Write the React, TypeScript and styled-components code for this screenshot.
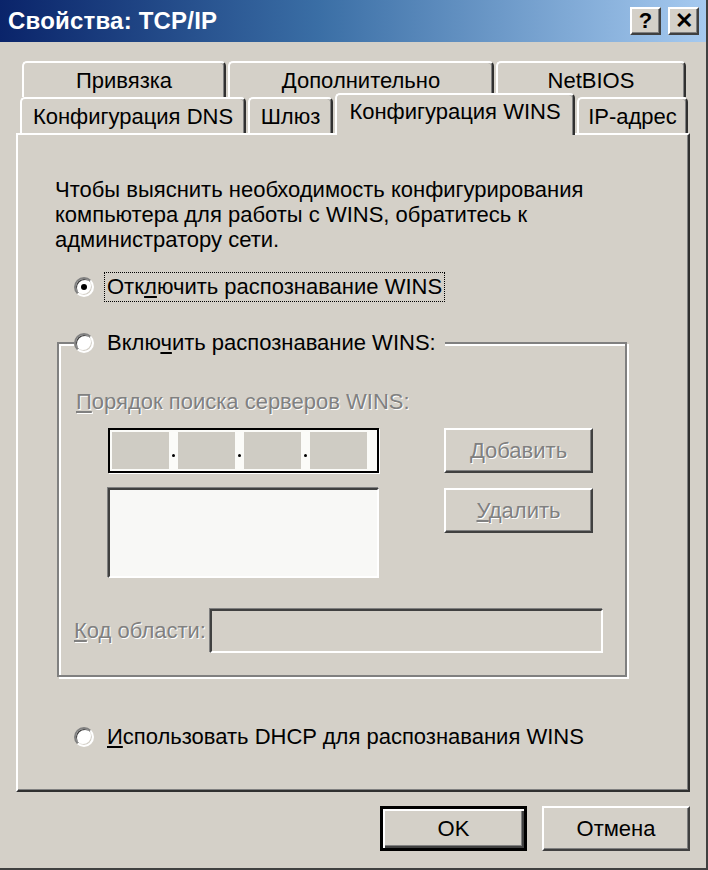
import React from "react";
import styled, { createGlobalStyle, css } from "styled-components";

const FACE = "#d4d0c8";
const FONT = `"Liberation Sans", Arial, sans-serif`;

const GlobalStyle = createGlobalStyle`
  html, body { margin: 0; padding: 0; background: ${FACE}; }
  body { font-family: ${FONT}; font-size: 22px; color: #000; }
  * { box-sizing: border-box; }
`;

const raised = css`
  background: ${FACE};
  border: 2px solid;
  border-color: #fff #404040 #404040 #fff;
  box-shadow: inset -1px -1px 0 #808080;
`;

const sunken = css`
  border: 2px solid;
  border-color: #404040 #fff #fff #404040;
  box-shadow: -1px -1px 0 #808080;
`;

const Window = styled.div`
  width: 708px;
  height: 870px;
  display: flex;
  flex-direction: column;
  background: ${FACE};
  border-right: 2px solid #404040;
  border-bottom: 2px solid #404040;
  overflow: hidden;
`;

const TitleBar = styled.div`
  height: 42px;
  flex: none;
  display: flex;
  align-items: center;
  padding: 0 7px 0 8px;
  background: linear-gradient(to right, #0a246a 0%, #3a6ea5 45%, #a6caf0 100%);
`;

const Title = styled.div`
  flex: 1;
  color: #fff;
  font-weight: bold;
  font-size: 24px;
  letter-spacing: 0.2px;
  line-height: 28px;
`;

const TitleButtons = styled.div`
  display: flex;
  gap: 7px;
`;

const TitleButton = styled.div`
  ${raised};
  width: 31px;
  height: 28px;
  display: flex;
  align-items: center;
  justify-content: center;
  font-weight: bold;
  font-size: 22px;
  line-height: 1;
`;

const Body = styled.div`
  flex: 1;
  display: flex;
  flex-direction: column;
  padding: 19px 16px 0 16px;
`;

const TabStrip = styled.div`
  display: flex;
  flex-direction: column;
`;

const TabRow = styled.div<{ $indent: number }>`
  display: flex;
  height: 36px;
  gap: 2px;
  padding-left: ${(p) => p.$indent}px;
`;

const Tab = styled.div<{ $w: number; $active?: boolean }>`
  width: ${(p) => p.$w}px;
  flex: none;
  display: flex;
  justify-content: center;
  align-items: flex-start;
  padding-top: 6px;
  background: ${FACE};
  border-top: 2px solid #fff;
  border-left: 2px solid #fff;
  border-right: 2px solid #303030;
  border-radius: 5px 5px 0 0;
  box-shadow: inset -1px 0 0 #808080;
  line-height: 24px;
  white-space: nowrap;
  ${(p) =>
    p.$active &&
    css`
      height: 42px;
      margin-top: -4px;
      padding-top: 5px;
      position: relative;
      z-index: 2;
    `}
`;

const Panel = styled.div`
  height: 659px;
  flex: none;
  border: 2px solid;
  border-color: #fff #303030 #303030 #fff;
  box-shadow: inset -1px -1px 0 #808080;
  padding: 42px 0 0 37px;
  display: flex;
  flex-direction: column;
  align-items: flex-start;
`;

const Intro = styled.p`
  margin: 0;
  line-height: 25px;
`;

const RadioRow = styled.div<{ $top: number }>`
  display: flex;
  align-items: center;
  height: 30px;
  margin: ${(p) => p.$top}px 0 0 19px;
`;

const RadioCircle = styled.span<{ $checked?: boolean }>`
  width: 20px;
  height: 20px;
  flex: none;
  border-radius: 50%;
  background: #fff;
  border: 2px solid;
  border-color: #808080 #fff #fff #808080;
  box-shadow: inset 1px 1px 0 #404040, inset -1px -1px 0 ${FACE};
  display: flex;
  align-items: center;
  justify-content: center;
  &::after {
    content: "";
    width: 6px;
    height: 6px;
    border-radius: 50%;
    background: #000;
    display: ${(p) => (p.$checked ? "block" : "none")};
  }
`;

const RadioLabel = styled.span<{ $focus?: boolean }>`
  margin-left: 10px;
  padding: 0 2px;
  line-height: 28px;
  border: 1px dotted ${(p) => (p.$focus ? "#000" : "transparent")};
  white-space: nowrap;
`;

const Key = styled.span`
  text-decoration: underline;
  text-underline-offset: 2px;
`;

const Group = styled.fieldset`
  margin: 26px 0 0 2px;
  width: 570px;
  min-width: 0;
  padding: 31px 0 22px 17px;
  border: 2px solid #808080;
  box-shadow: 2px 2px 0 #fff, inset 2px 2px 0 #fff;
`;

const Legend = styled.legend`
  margin-left: -2px;
  padding: 0 6px 0 0;
  display: flex;
  align-items: center;
  height: 30px;
  background: ${FACE};
`;

const Disabled = styled.span`
  color: #808080;
  text-shadow: 1px 1px 0 #fff;
`;

const DisabledLine = styled.div`
  line-height: 26px;
  color: #808080;
  text-shadow: 1px 1px 0 #fff;
`;

const ServerGrid = styled.div`
  display: grid;
  grid-template-columns: 271px 149px;
  column-gap: 65px;
  row-gap: 15px;
  align-items: start;
  margin: 13px 0 0 32px;
`;

const IpBox = styled.div`
  height: 45px;
  border: 2px solid #000;
  box-shadow: 1px 1px 0 #fff;
  background: #fbfbf8;
  display: flex;
  padding: 2px 9px 2px 2px;
`;

const IpField = styled.div`
  width: 57px;
  flex: none;
  background: #cfccc4;
`;

const IpDot = styled.div`
  width: 9px;
  flex: none;
  display: flex;
  align-items: flex-end;
  justify-content: center;
  padding-bottom: 12px;
  &::after {
    content: "";
    width: 3px;
    height: 3px;
    background: #000;
    border-radius: 50%;
  }
`;

const PushButton = styled.div<{ $w?: number; $default?: boolean }>`
  ${raised};
  width: ${(p) => p.$w ?? 149}px;
  height: 45px;
  display: flex;
  align-items: center;
  justify-content: center;
  line-height: 24px;
  ${(p) =>
    p.$default &&
    css`
      border: 3px solid #000;
      box-shadow: inset 2px 2px 0 #fff, inset -2px -2px 0 #404040, inset -3px -3px 0 #808080;
    `}
`;

const ListBox = styled.div`
  ${sunken};
  height: 90px;
  background: #f8f8f6;
`;

const CodeRow = styled.div`
  display: flex;
  align-items: center;
  margin: 31px 0 0 -2px;
`;

const CodeLabel = styled(Disabled)`
  width: 136px;
  flex: none;
  line-height: 26px;
  white-space: nowrap;
`;

const CodeInput = styled.div`
  ${sunken};
  width: 393px;
  height: 44px;
  background: ${FACE};
`;

const Footer = styled.div`
  display: flex;
  justify-content: flex-end;
  gap: 15px;
  margin-top: 14px;
`;

export default function App() {
  return (
    <>
      <GlobalStyle />
      <Window>
        <TitleBar>
          <Title>Свойства: TCP/IP</Title>
          <TitleButtons>
            <TitleButton>?</TitleButton>
            <TitleButton>✕</TitleButton>
          </TitleButtons>
        </TitleBar>
        <Body>
          <TabStrip>
            <TabRow $indent={6}>
              <Tab $w={204}>Привязка</Tab>
              <Tab $w={266}>Дополнительно</Tab>
              <Tab $w={190}>NetBIOS</Tab>
            </TabRow>
            <TabRow $indent={4}>
              <Tab $w={226}>Конфигурация DNS</Tab>
              <Tab $w={85}>Шлюз</Tab>
              <Tab $w={240} $active>
                Конфигурация WINS
              </Tab>
              <Tab $w={111}>IP-адрес</Tab>
            </TabRow>
          </TabStrip>
          <Panel>
            <Intro>
              Чтобы выяснить необходимость конфигурирования
              <br />
              компьютера для работы с WINS, обратитесь к
              <br />
              администратору сети.
            </Intro>
            <RadioRow $top={20}>
              <RadioCircle $checked />
              <RadioLabel $focus>
                Отк<Key>л</Key>ючить распознавание WINS
              </RadioLabel>
            </RadioRow>
            <Group>
              <Legend>
                <RadioCircle />
                <RadioLabel>
                  Вклю<Key>ч</Key>ить распознавание WINS:
                </RadioLabel>
              </Legend>
              <DisabledLine>
                <Key>П</Key>орядок поиска серверов WINS:
              </DisabledLine>
              <ServerGrid>
                <IpBox>
                  <IpField />
                  <IpDot />
                  <IpField />
                  <IpDot />
                  <IpField />
                  <IpDot />
                  <IpField />
                </IpBox>
                <PushButton>
                  <Disabled>
                    <Key>Д</Key>обавить
                  </Disabled>
                </PushButton>
                <ListBox />
                <PushButton>
                  <Disabled>
                    <Key>У</Key>далить
                  </Disabled>
                </PushButton>
              </ServerGrid>
              <CodeRow>
                <CodeLabel>
                  <Key>К</Key>од области:
                </CodeLabel>
                <CodeInput />
              </CodeRow>
            </Group>
            <RadioRow $top={45}>
              <RadioCircle />
              <RadioLabel>
                <Key>И</Key>спользовать DHCP для распознавания WINS
              </RadioLabel>
            </RadioRow>
          </Panel>
          <Footer>
            <PushButton $w={147} $default>
              OK
            </PushButton>
            <PushButton $w={148}>Отмена</PushButton>
          </Footer>
        </Body>
      </Window>
    </>
  );
}
